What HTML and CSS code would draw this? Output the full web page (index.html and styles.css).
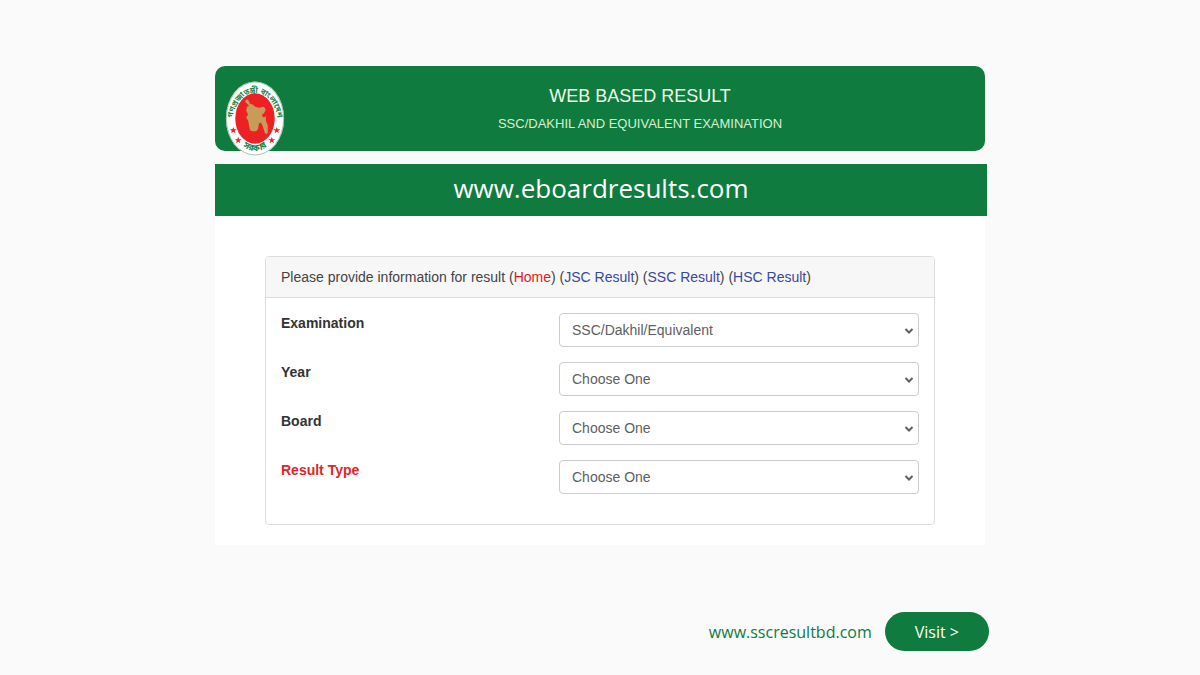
FILE: index.html
```html
<!DOCTYPE html>
<html lang="en">
<head>
<meta charset="utf-8">
<meta name="viewport" content="width=device-width, initial-scale=1">
<title>Web Based Result</title>
<link rel="stylesheet" href="styles.css">
</head>
<body>
<div class="page">
  <header class="header">
    <svg class="seal" viewBox="0 0 60 76" role="img" aria-label="Government seal of Bangladesh">
      <defs>
        <path id="arc-top" d="M7 43 A23 31 0 0 1 53 43"/>
        <path id="arc-bottom" d="M10 56 A24 33 0 0 0 50 56"/>
        <path id="star" d="M0-3.500 .9-1 3.500-1 1.400.6 2.200 3 0 1.500-2.200 3-1.400.6-3.500-1-.9-1Z"/>
      </defs>
      <ellipse cx="30" cy="38" rx="29.500" ry="37.500" fill="#fff"/>
      <ellipse cx="30" cy="38" rx="29" ry="37" fill="none" stroke="#5ea57a" stroke-width=".6"/>
      <ellipse cx="30" cy="38" rx="20" ry="25.500" fill="#ed2024"/>
      <path fill="#c79b58" d="M20 21l1-2 2 0 2 4 3 1 2 2 4 1 5-1 2 3-2 4-2 1 1 3 3-1 0 4 2 5 0 7-1 2-2-1-2-7-2-4-2 1-1 6-2 2-4 0-2-1-1-5-1-5-2-3 2-3-2-4 1-4 2-1z"/>
      <text class="seal-text"><textPath href="#arc-top" startOffset="50%">গণপ্রজাতন্ত্রী বাংলাদেশ</textPath></text>
      <text class="seal-text seal-text-large"><textPath href="#arc-bottom" startOffset="50%">সরকার</textPath></text>
      <g fill="#ed2024">
        <use href="#star" x="8" y="50"/><use href="#star" x="13" y="60"/>
        <use href="#star" x="52" y="50"/><use href="#star" x="47" y="60"/>
      </g>
    </svg>
    <div class="heading">
      <h1 class="title">WEB BASED RESULT</h1>
      <p class="subtitle">SSC/DAKHIL AND EQUIVALENT EXAMINATION</p>
    </div>
  </header>

  <div class="banner">www.eboardresults.com</div>

  <main class="content">
    <form class="card">
      <div class="card-head">Please provide information for result (<a class="home" href="#">Home</a>) (<a href="#">JSC Result</a>) (<a href="#">SSC Result</a>) (<a href="#">HSC Result</a>)</div>
      <div class="card-body">
        <div class="row">
          <label for="exam">Examination</label>
          <div class="field"><select id="exam"><option>SSC/Dakhil/Equivalent</option></select><svg class="chevron" viewBox="0 0 10 6"><path d="M1.500 1l3.500 3.500 3.500-3.500"/></svg></div>
        </div>
        <div class="row">
          <label for="year">Year</label>
          <div class="field"><select id="year"><option>Choose One</option></select><svg class="chevron" viewBox="0 0 10 6"><path d="M1.500 1l3.500 3.500 3.500-3.500"/></svg></div>
        </div>
        <div class="row">
          <label for="board">Board</label>
          <div class="field"><select id="board"><option>Choose One</option></select><svg class="chevron" viewBox="0 0 10 6"><path d="M1.500 1l3.500 3.500 3.500-3.500"/></svg></div>
        </div>
        <div class="row">
          <label class="required" for="type">Result Type</label>
          <div class="field"><select id="type"><option>Choose One</option></select><svg class="chevron" viewBox="0 0 10 6"><path d="M1.500 1l3.500 3.500 3.500-3.500"/></svg></div>
        </div>
      </div>
    </form>
  </main>

  <footer class="footer">
    <a class="site" href="#">www.sscresultbd.com</a>
    <button class="visit" type="button">Visit &gt;</button>
  </footer>
</div>
</body>
</html>
```
FILE: styles.css
```css
* {
  box-sizing: border-box;
}

body {
  margin: 0;
  background: #fafafb;
  color: #444;
  font: 14px/20px "Liberation Sans", Arial, sans-serif;
}

a {
  color: #3949a0;
  text-decoration: none;
}

.page {
  max-width: 770px;
  margin: 0 auto;
  padding: 66px 0 24px;
}

.header {
  display: flex;
  align-items: flex-start;
  gap: 10px;
  padding: 15px 0 0 10px;
  margin-bottom: 13px;
  border-radius: 10px;
  background: #0f7b3e;
}

.seal {
  flex: none;
  width: 60px;
  height: 75px;
  margin-bottom: -5px;
}

.seal-text {
  font: bold 8px "Noto Sans Bengali", "Noto Sans", FreeSans, sans-serif;
  fill: #23814c;
  text-anchor: middle;
}

.seal-text-large {
  font-size: 9px;
}

.heading {
  flex: 1;
  color: #eefbe9;
  text-align: center;
}

.title {
  margin: 5px 0 8px;
  font-size: 18px;
  font-weight: 400;
  line-height: 20px;
}

.subtitle {
  margin: 0;
  color: #d9efd0;
  font-size: 13px;
}

.banner {
  margin-right: -2px;
  padding: 6px 0 10px;
  background: #0f7b3e;
  color: #fff;
  font: 26px/36px "Open Sans", "Noto Sans", sans-serif;
  text-align: center;
}

.content {
  padding: 40px 50px 20px;
  background: #fff;
}

.card {
  border: 1px solid #ddd;
  border-radius: 4px;
  background: #fff;
}

.card-head {
  padding: 10px 15px;
  border-bottom: 1px solid #ddd;
  border-radius: 3px 3px 0 0;
  background: #f7f7f8;
}

.card-head .home {
  color: #e6191e;
}

.card-body {
  display: grid;
  gap: 15px;
  padding: 15px 15px 30px;
}

.row {
  display: grid;
  grid-template-columns: 248fr 360fr;
  gap: 30px;
}

label {
  color: #333;
  font-weight: 700;
}

label.required {
  color: #e0262a;
}

.field {
  position: relative;
}

select {
  display: block;
  width: 100%;
  height: 34px;
  padding: 0 24px 0 12px;
  border: 1px solid #ccc;
  border-radius: 4px;
  appearance: none;
  background: #fff;
  color: #606060;
  font: inherit;
}

.chevron {
  position: absolute;
  top: 15px;
  right: 5px;
  width: 10px;
  height: 6px;
  fill: none;
  stroke: #606060;
  stroke-width: 2;
  pointer-events: none;
}

.footer {
  display: flex;
  align-items: center;
  justify-content: flex-end;
  gap: 13px;
  margin: 67px -4px 0 0;
  font: 16px/24px "Open Sans", "Noto Sans", sans-serif;
}

.site {
  color: #0f7b3e;
}

.visit {
  padding: 8px 30px 7px;
  border: 0;
  border-radius: 20px;
  background: #0f7b3e;
  color: #fff;
  font: inherit;
}
```
